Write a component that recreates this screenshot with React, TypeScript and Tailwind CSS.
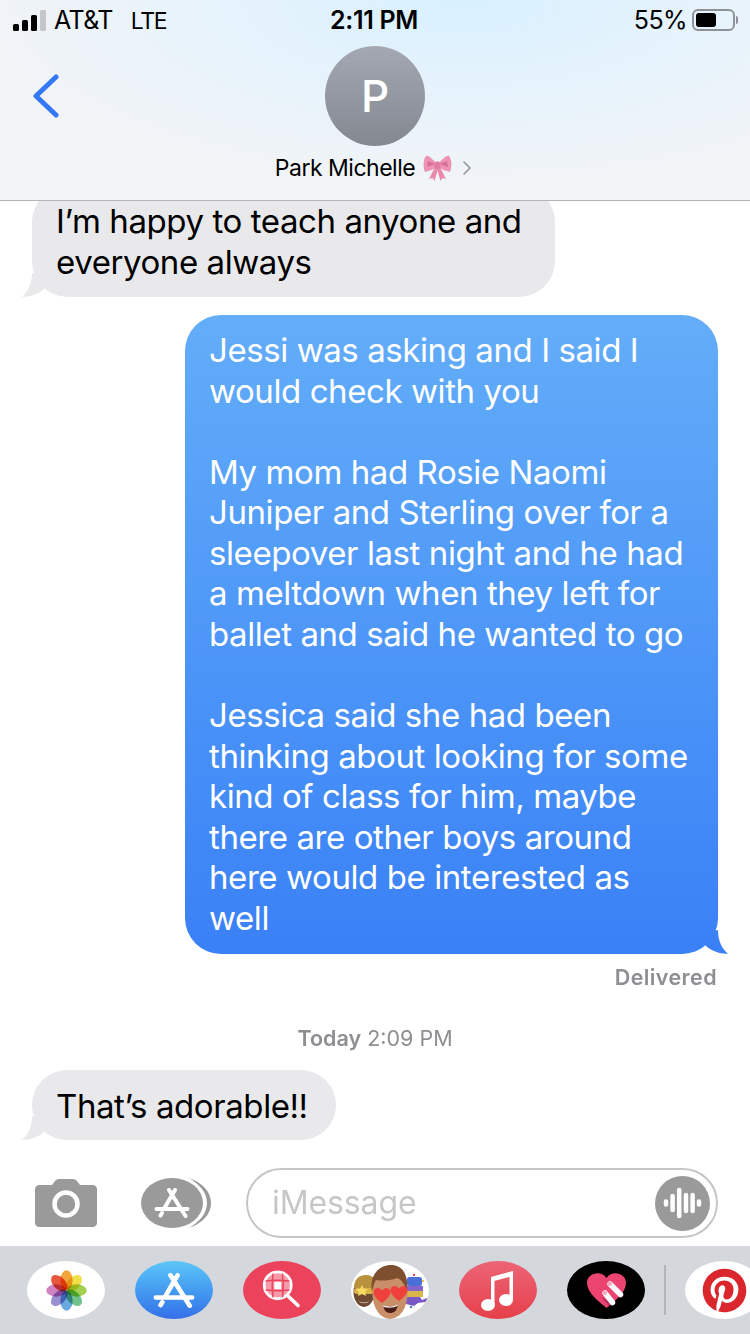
import { FaPinterest } from "react-icons/fa";

const AppGlyph = ({ className }: { className?: string }) => (
  <svg viewBox="0 0 36 30" className={className} fill="none" stroke="currentColor" strokeWidth="4" strokeLinecap="round">
    <path d="M21 2 10.500 20" />
    <path d="M15 2 31.500 28" />
    <path d="M2.500 21h31" />
    <path d="M8 25 6.500 27.500" />
  </svg>
);

const Pill = ({ className, children }: { className: string; children: React.ReactNode }) => (
  <div className={`flex h-[58px] w-[78px] shrink-0 items-center justify-center overflow-hidden rounded-[50%] ${className}`}>
    {children}
  </div>
);

const PHOTO_PETALS = [
  ["#f2a53a", 0],
  ["#f0e04a", 45],
  ["#a4d04f", 90],
  ["#72c48c", 135],
  ["#6aa9e0", 180],
  ["#9a8fd0", 225],
  ["#cf82c0", 270],
  ["#e8583f", 315],
] as const;

const HEART = "M0 8C-5 4-8.500 1-8.500-3c0-4 5-6 8.500-1.500C3.500-9 8.500-7 8.500-3 8.500 1 5 4 0 8z";

function LeftTail() {
  return (
    <svg viewBox="0 0 40 24" className="absolute bottom-0 left-[-10px] h-[24px] w-[40px]" fill="#e9e9eb">
      <path d="M10 0C10 11 6 19 0 23.700 8 24.300 16 21 22 16L32 4z" />
    </svg>
  );
}

function BubbleLines({ lines }: { lines: string[] }) {
  return (
    <>
      {lines.map((l, i) => (
        <div key={i} className="h-[40.55px] whitespace-pre">
          {l || " "}
        </div>
      ))}
    </>
  );
}

const SENT = [
  "Jessi was asking and I said I",
  "would check with you",
  "",
  "My mom had Rosie Naomi",
  "Juniper and Sterling over for a",
  "sleepover last night and he had",
  "a meltdown when they left for",
  "ballet and said he wanted to go",
  "",
  "Jessica said she had been",
  "thinking about looking for some",
  "kind of class for him, maybe",
  "there are other boys around",
  "here would be interested as",
  "well",
];

export default function App() {
  return (
    <div className="flex h-[1334px] w-[750px] flex-col overflow-hidden bg-white font-['Inter',sans-serif] text-black">
      <header className="relative z-10 h-[201px] shrink-0 border-b border-[#b4b4b6] bg-[#f3f4f6] bg-[radial-gradient(70%_100%_at_62%_0%,#d8f0ff_0%,#e6f3fc_45%,#f3f4f6_100%)]">
        <div className="grid h-[42px] grid-cols-3 items-center pl-[13px] pr-[15px] text-[25px] tracking-[-0.6px]">
          <div className="flex items-center">
            <div className="flex shrink-0 items-end gap-[3px] pb-[1px]">
              <span className="h-[7px] w-[6px] rounded-[1.5px] bg-black" />
              <span className="h-[11px] w-[6px] rounded-[1.5px] bg-black" />
              <span className="h-[16px] w-[6px] rounded-[1.5px] bg-black" />
              <span className="h-[21px] w-[6px] rounded-[1.5px] bg-[#c4c6c8]" />
            </div>
            <span className="ml-[8px] whitespace-pre">AT&amp;T</span>
            <span className="ml-[18px] text-[23px] tracking-[-1.4px]">LTE</span>
          </div>
          <div className="text-center font-semibold tracking-[-0.3px]">2:11 PM</div>
          <div className="flex items-center justify-end">
            <span>55%</span>
            <div className="relative -mt-[2px] ml-[5px] h-[22px] w-[43px] rounded-[6px] border-2 border-[#8e9297] p-[2px]">
              <div className="h-full w-[20px] rounded-[3px] bg-black" />
              <span className="absolute right-[-5px] top-[5px] h-[8px] w-[2px] rounded-r-full bg-[#8e9297]" />
            </div>
          </div>
        </div>
        <div className="relative flex flex-col items-center">
          <svg viewBox="0 0 28 44" className="absolute left-[32px] top-[32px] h-[44px] w-[28px]" fill="none" stroke="#3478f6" strokeWidth="5" strokeLinecap="round" strokeLinejoin="round">
            <path d="M24 3 4 22l20 19" />
          </svg>
          <div className="mt-[4px] flex h-[100px] w-[100px] items-center justify-center rounded-full bg-gradient-to-b from-[#a4a8b2] to-[#848891] text-[44px] font-medium leading-none text-white">
            P
          </div>
          <div className="mt-[8px] flex h-[28px] items-center pr-[4px] text-[23px] tracking-[-0.5px]">
            <span>Park Michelle</span>
            <svg viewBox="0 0 29 26" className="ml-[8px] h-[26px] w-[29px]">
              <path d="M12 12 6 24l3.500-1 2 3L15 14z" fill="#e98aab" />
              <path d="M17 12l6 12-3.500-1-2 3L14 14z" fill="#e98aab" />
              <path d="M14 9C10 5 6 0 3 1 0 4 0 13 2 17c4-1 9-3 12-5z" fill="#ee93b3" />
              <path d="M15 9c4-4 8-9 11-8 3 3 3 12 1 16-4-1-9-3-12-5z" fill="#ee93b3" />
              <path d="M12 9 5 6 4 12z" fill="#d56f94" />
              <path d="M17 9l7-3 1 6z" fill="#d56f94" />
              <rect x="11.500" y="6.500" width="6" height="7.500" rx="2.500" fill="#e27c9f" />
            </svg>
            <svg viewBox="0 0 8 14" className="ml-[11px] h-[14px] w-[8px]" fill="none" stroke="#8f9298" strokeWidth="1.500" strokeLinecap="round">
              <path d="M1 1l6 6-6 6" />
            </svg>
          </div>
        </div>
      </header>

      <main className="flex min-h-0 flex-1 flex-col text-[33px] leading-[40.55px] tracking-[-0.42px]">
        <div className="relative -mt-[15px] ml-[32px] w-[523px]">
          <LeftTail />
          <div className="relative rounded-[36px] bg-[#e9e9eb] py-[15px] pl-[24px]">
            <BubbleLines lines={["I’m happy to teach anyone and", "everyone always"]} />
          </div>
        </div>

        <div className="relative ml-[185px] mt-[18px] w-[533px]">
          <svg viewBox="0 0 40 24" className="absolute bottom-0 right-[-10px] h-[24px] w-[40px]" fill="#3a80f6">
            <path d="M30 0C30 11 34 19 40 23.700 32 24.300 24 21 18 16L8 4z" />
          </svg>
          <div className="relative rounded-[36px] bg-gradient-to-b from-[#63adf9] to-[#3a80f6] pb-[16px] pl-[24px] pt-[15px] text-white">
            <BubbleLines lines={SENT} />
          </div>
        </div>

        <div className="mr-[33px] mt-[10px] text-right text-[21.500px] font-semibold leading-[26px] tracking-[0.4px] text-[#8e8e93]">
          Delivered
        </div>
        <div className="mt-[35px] text-center text-[21.500px] leading-[26px] tracking-normal text-[#8e8e93]">
          <span className="font-semibold">Today</span> 2:09 PM
        </div>

        <div className="relative ml-[32px] mt-[19px] w-[304px]">
          <LeftTail />
          <div className="relative h-[70px] rounded-[36px] bg-[#e9e9eb] pl-[24px] pt-[16px]">That’s adorable!!</div>
        </div>

        <div className="mt-[28px] flex h-[70px] items-center pl-[35px] pr-[32px]">
          <svg viewBox="0 0 62 48" className="h-[48px] w-[62px] shrink-0" fill="#9a9a9a">
            <path d="M4 6h13l3-4c1-1 2-2 4-2h14c2 0 3 1 4 2l3 4h13c2 0 4 2 4 4v34c0 2-2 4-4 4H4c-2 0-4-2-4-4V10c0-2 2-4 4-4z" />
            <circle cx="31" cy="25" r="11.500" fill="none" stroke="#fff" strokeWidth="4.500" />
          </svg>
          <div className="relative ml-[44px] flex h-[50px] w-[62px] shrink-0 items-center justify-center rounded-[50%] bg-[#9a9a9a] text-white">
            <AppGlyph className="h-[30px] w-[36px]" />
            <svg viewBox="0 0 70 50" className="absolute left-0 top-0 h-[50px] w-[70px]" fill="#9a9a9a">
              <path d="M48 0C62 5 70 14 70 25 70 36 62 45 48 50 58 44 66 36 66 25 66 14 58 6 48 0z" />
            </svg>
          </div>
          <div className="ml-[43px] flex h-[70px] flex-1 items-center justify-between rounded-full border-2 border-[#c6c6c8] pl-[24px] pr-[6px] text-[32px] tracking-[-0.1px] text-[#c7c7c9]">
            <span>iMessage</span>
            <div className="flex h-[55px] w-[55px] items-center justify-center rounded-full bg-[#9a9a9a]">
              <svg viewBox="0 0 40 32" className="h-[32px] w-[40px]" stroke="#fff" strokeWidth="4.500" strokeLinecap="round">
                <path d="M3 14.500v3M9.600 9v14M16.200 3v26M23 8v16M29.600 8v16M36 14.500v3" />
              </svg>
            </div>
          </div>
        </div>

        <div className="mt-[8px] flex h-[88px] items-center gap-[30px] bg-[#d4d7dc] pl-[27px]">
          <Pill className="bg-white">
            <svg viewBox="-40 -40 80 80" className="h-[41px] w-[41px]">
              {PHOTO_PETALS.map(([color, deg]) => (
                <ellipse key={deg} cx="0" cy="-20" rx="12" ry="19.500" fill={color} className="mix-blend-multiply" transform={`rotate(${deg})`} />
              ))}
            </svg>
          </Pill>
          <Pill className="bg-gradient-to-b from-[#5cc6f8] to-[#356fe8] text-white">
            <AppGlyph className="h-[35px] w-[42px]" />
          </Pill>
          <Pill className="bg-[#ec435c]">
            <svg viewBox="0 0 40 40" className="h-[40px] w-[40px]" fill="none" stroke="#fff">
              <circle cx="15.700" cy="15.300" r="13.500" fill="#f49aa8" strokeWidth="2.800" />
              <path d="M11 3.500c-1 8-1 16 0 24M20.500 3.500c1 8 1 16 0 24M3.500 11c8-1 16-1 24 0M3.500 20c8 1 16 1 24 0" stroke="#ec435c" strokeWidth="1.500" />
              <rect x="12.500" y="12" width="6.500" height="7" fill="#fff" stroke="none" />
              <path d="M26 26l10 9.500" strokeWidth="3.600" strokeLinecap="round" />
            </svg>
          </Pill>
          <Pill className="bg-white">
            <svg viewBox="0 0 78 58" className="h-[58px] w-[78px]">
              <ellipse cx="13" cy="31" rx="10.500" ry="15" fill="#6e4a32" />
              <path d="M3 27c0-9 5-13 12-13 4 0 8 2 9 5v8z" fill="#b8923c" />
              <rect x="3" y="27" width="20" height="6" rx="3" fill="#d9b34a" />
              <path d="M11 24l2 4 4 .5-3 2.500 1 4-4-2-4 2 1-4-3-2.500 4-.5z" fill="#f8dc62" />
              <path d="M8 40c3 2 7 2 10 0-1 3-9 3-10 0z" fill="#f0e6dc" />
              <rect x="56" y="16" width="15" height="9" rx="2.500" fill="#4a6fd8" />
              <rect x="56" y="25" width="16" height="5" fill="#8465c9" />
              <rect x="55" y="30" width="17" height="6" fill="#d9b64c" />
              <path d="M55 36h14l2 3 5-2c1 2 0 4-2 4l-7 1-4 3-8-2z" fill="#7a58c8" />
              <circle cx="72" cy="20" r="1.200" fill="#f2c53d" />
              <circle cx="63" cy="14" r="1.200" fill="#e9465a" />
              <circle cx="60" cy="46" r="1.300" fill="#5c7fe0" />
              <circle cx="68" cy="49" r="1.200" fill="#f2c53d" />
              <ellipse cx="39" cy="33" rx="17.500" ry="25" fill="#c98f68" />
              <path d="M21 31C18 13 29 4 40 4c11 0 18 9 16 27-2-8-6-13-10-14-8 3-17 3-21 2-2 3-3 7-4 12z" fill="#7d4f2e" />
              <path d="M32 44c5 2 11 2 15-1-1 7-4 9-8 9-4 0-6-3-7-8z" fill="#4a1f1a" />
              <path d="M32 44c5 2 11 2 15-1l-.5 2c-4 2-9 2-14 1z" fill="#f4ece6" />
              <path d={HEART} fill="#f0403c" transform="translate(31 34)" />
              <path d={HEART} fill="#f0403c" transform="translate(48 32)" />
            </svg>
          </Pill>
          <Pill className="bg-gradient-to-b from-[#ec6477] to-[#e63f49]">
            <svg viewBox="0 0 36 44" className="h-[44px] w-[36px]" fill="#fff">
              <path d="M11 9 33 3v5L14 13z" />
              <path d="M11 9h3.500v27h-3.500zM29.500 4H33v27h-3.500z" />
              <ellipse cx="8" cy="37" rx="7" ry="6" />
              <ellipse cx="26" cy="32" rx="7" ry="6" />
            </svg>
          </Pill>
          <Pill className="bg-black">
            <svg viewBox="0 0 39 36" className="h-[36px] w-[39px]" fill="none">
              <path d="M19.500 36C11 29 0 21 0 10.500 0 2 13-3 19.500 6 26-3 39 2 39 10.500 39 21 28 29 19.500 36z" fill="#ec4470" />
              <path d="M14 25l8 9 4-3z" fill="#b72f5f" />
              <path d="M18 21l7.500 9.500M23 12l10.500 10.500" stroke="#fff" strokeWidth="5.500" strokeLinecap="round" />
              <circle cx="17.800" cy="20.800" r="2.300" fill="#f7a6c0" />
              <circle cx="22.800" cy="11.800" r="2.300" fill="#f7a6c0" />
            </svg>
          </Pill>
          <div className="-ml-[11px] h-[50px] w-[2px] shrink-0 bg-[#b3b5ba]" />
          <Pill className="-ml-[11px] justify-start bg-white pl-[17px]">
            <FaPinterest className="h-[45px] w-[45px] shrink-0 text-[#d9272d]" />
          </Pill>
        </div>
      </main>
    </div>
  );
}
